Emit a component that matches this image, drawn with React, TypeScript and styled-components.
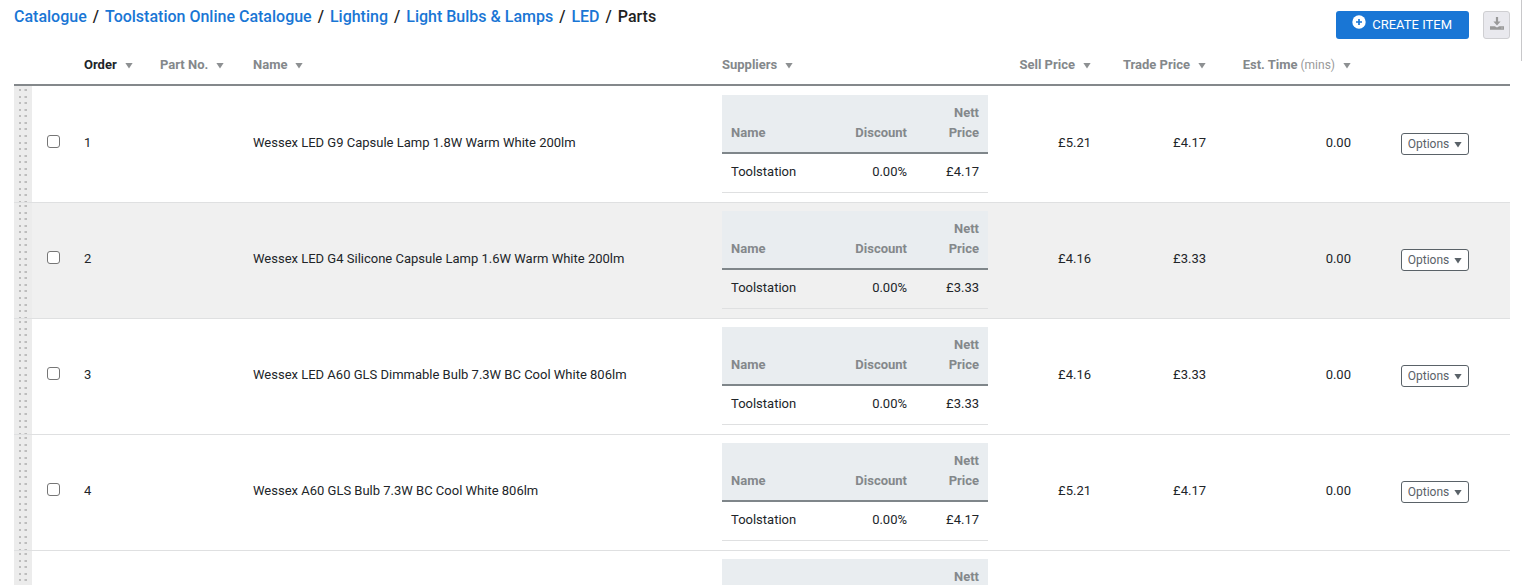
import React from "react";
import styled, { createGlobalStyle } from "styled-components";

const GlobalStyle = createGlobalStyle`
  *, *::before, *::after { box-sizing: border-box; }
  html, body { margin: 0; background: #fff; }
  body {
    font-family: Roboto, "Liberation Sans", sans-serif;
    font-size: 13px;
    line-height: 20px;
    color: #212529;
  }
  button { font-family: inherit; }
`;

const Page = styled.main`
  position: relative;
  height: 100vh;
  overflow: hidden;
  padding: 6px 12px 0 14px;
`;

const ScrollThumb = styled.div`
  position: absolute;
  top: 0;
  right: 0;
  width: 1px;
  height: 61px;
  background: #c8c8ca;
`;

const TopBar = styled.header`
  display: flex;
  justify-content: space-between;
  align-items: flex-start;
  height: 38px;
`;

const Breadcrumb = styled.nav`
  display: flex;
  gap: 6px;
  font-size: 16px;
  font-weight: 500;
  line-height: 22px;
  color: #222;
`;

const Crumb = styled.a`
  color: #1976d5;
  text-decoration: none;
`;

const Actions = styled.div`
  display: flex;
  gap: 14px;
  padding-top: 5px;
`;

const CreateButton = styled.button`
  display: flex;
  align-items: flex-start;
  gap: 6px;
  height: 28px;
  padding: 4px 17px 4px 16px;
  border: 0;
  border-radius: 3px;
  background: #1976d5;
  color: #fff;
  font-size: 13px;
  line-height: 20px;
`;

const DownloadButton = styled.button`
  display: flex;
  justify-content: center;
  width: 27px;
  height: 28px;
  padding: 5px 0;
  border: 1px solid #cfcfd2;
  border-radius: 3px;
  background: #e9e9ee;
`;

const Table = styled.table`
  width: 100%;
  table-layout: fixed;
  border-spacing: 0;
`;

const Col = styled.col<{ $w?: number }>`
  width: ${(p) => (p.$w ? `${p.$w}px` : "auto")};
`;

const HeadCell = styled.th<{ $right?: boolean }>`
  height: 42px;
  padding: 2px 9px 0;
  border-bottom: 2px solid #84888b;
  text-align: ${(p) => (p.$right ? "right" : "left")};
  vertical-align: middle;
  white-space: nowrap;
`;

const SortButton = styled.button<{ $active?: boolean }>`
  display: inline-flex;
  align-items: center;
  gap: 8px;
  padding: 0;
  border: 0;
  background: none;
  color: ${(p) => (p.$active ? "#212529" : "#84888b")};
  font-size: 13px;
  font-weight: 700;
  line-height: 20px;

  small {
    font-size: 12px;
    font-weight: 400;
    color: #999;
  }
`;

const Row = styled.tr<{ $shaded?: boolean }>`
  background: ${(p) => (p.$shaded ? "#f0f0f0" : "#fff")};
  & > td { border-top: 1px solid #dfe0e1; }
  &:first-child > td { border-top-color: transparent; }
`;

const Cell = styled.td<{ $align?: "right" | "center" }>`
  height: 116px;
  padding: 0 9px 4px;
  text-align: ${(p) => p.$align ?? "left"};
  vertical-align: middle;
`;

const SuppliersCell = styled.td`
  padding: 8px 9px 9px;
  vertical-align: top;
`;

const dotStops = [3, 10, 16, 23, 29, 36, 42]
  .map((y) => `#ececec ${y - 1}px, transparent ${y - 1}px, transparent ${y + 1}px, #ececec ${y + 1}px`)
  .join(", ");

const HandleCell = styled.td`
  background:
    linear-gradient(to bottom, ${dotStops}) 0 0 / 100% 46px,
    linear-gradient(to right,
      #ececec 5px, #bdbdbd 5px, #bdbdbd 7px, #ececec 7px,
      #ececec 10px, #d3d3d3 10px, #d3d3d3 11px, #bdbdbd 11px, #bdbdbd 13px, #ececec 13px);
  cursor: move;
`;

const Check = styled.input`
  display: block;
  appearance: none;
  width: 13px;
  height: 13px;
  margin: 0 0 2px 6px;
  border: 1px solid #767676;
  border-radius: 3px;
  background: #fff;
`;

const SupplierTable = styled.table`
  width: 100%;
  table-layout: fixed;
  border-spacing: 0;

  th, td {
    padding: 8px 9px 9px;
    text-align: right;
    vertical-align: bottom;
  }
  th:first-child, td:first-child { text-align: left; }
  th {
    background: #e9edf0;
    border-bottom: 2px solid #7f868a;
    color: #84888b;
    font-weight: 700;
  }
  td {
    padding-bottom: 10px;
    border-bottom: 1px solid #dfe0e1;
  }
`;

const OptionsButton = styled.button`
  display: inline-flex;
  align-items: center;
  gap: 5px;
  height: 22px;
  margin-top: 3px;
  padding: 0 6px;
  border: 1px solid #5a6268;
  border-radius: 3px;
  background: #fff;
  color: #5a6268;
  font-size: 12px;
  line-height: 20px;
`;

const Triangle = ({ color = "#8d9092" }: { color?: string }) => (
  <svg width="8" height="7" viewBox="0 0 8 7" aria-hidden="true">
    <path d="M.4 1h7.2L4 6.6z" fill={color} />
  </svg>
);

const PlusCircle = () => (
  <svg width="14" height="14" viewBox="0 0 14 14" aria-hidden="true">
    <circle cx="7" cy="7" r="6.7" fill="#fff" />
    <path d="M7 4v6M4 7h6" stroke="#1976d5" strokeWidth="1.7" />
  </svg>
);

const DownloadIcon = () => (
  <svg width="14" height="14" viewBox="0 0 14 14" aria-hidden="true">
    <path d="M5.9 0h2.2v4.6h2.5L7 8.4 3.4 4.6h2.5z" fill="#999" />
    <path d="M0 9.3h4.8L7 10.5l2.2-1.2H14v3.5H0z" fill="#999" />
    <path d="M11.5 10.6h1v1h-1z" fill="#d5d5d8" />
  </svg>
);

const crumbs = ["Catalogue", "Toolstation Online Catalogue", "Lighting", "Light Bulbs & Lamps", "LED"];

const items = [
  { name: "Wessex LED G9 Capsule Lamp 1.8W Warm White 200lm", sell: "£5.21", trade: "£4.17" },
  { name: "Wessex LED G4 Silicone Capsule Lamp 1.6W Warm White 200lm", sell: "£4.16", trade: "£3.33" },
  { name: "Wessex LED A60 GLS Dimmable Bulb 7.3W BC Cool White 806lm", sell: "£4.16", trade: "£3.33" },
  { name: "Wessex A60 GLS Bulb 7.3W BC Cool White 806lm", sell: "£5.21", trade: "£4.17" },
  { name: "", sell: "", trade: "" },
];

const columns: { label: string; note?: string; right?: boolean; active?: boolean }[] = [
  { label: "Order", active: true },
  { label: "Part No." },
  { label: "Name" },
  { label: "Suppliers" },
  { label: "Sell Price", right: true },
  { label: "Trade Price", right: true },
  { label: "Est. Time", note: "(mins)", right: true },
];

const widths = [18, 43, 76, 93, undefined, 284, 103, 115, 145, 150];

export default function App() {
  return (
    <Page>
      <GlobalStyle />
      <TopBar>
        <Breadcrumb aria-label="Breadcrumb">
          {crumbs.map((c) => (
            <React.Fragment key={c}>
              <Crumb href="#">{c}</Crumb>
              <span>/</span>
            </React.Fragment>
          ))}
          <span>Parts</span>
        </Breadcrumb>
        <Actions>
          <CreateButton type="button">
            <PlusCircle />
            CREATE ITEM
          </CreateButton>
          <DownloadButton type="button" aria-label="Download">
            <DownloadIcon />
          </DownloadButton>
        </Actions>
      </TopBar>
      <Table>
        <colgroup>
          {widths.map((w, i) => (
            <Col key={i} $w={w} />
          ))}
        </colgroup>
        <thead>
          <tr>
            <HeadCell />
            <HeadCell />
            {columns.map((c) => (
              <HeadCell key={c.label} $right={c.right}>
                <SortButton type="button" $active={c.active}>
                  <span>
                    {c.label}
                    {c.note && <small> {c.note}</small>}
                  </span>
                  <Triangle />
                </SortButton>
              </HeadCell>
            ))}
            <HeadCell />
          </tr>
        </thead>
        <tbody>
          {items.map((item, i) => (
            <Row key={i} $shaded={i === 1}>
              <HandleCell />
              <Cell>
                <Check type="checkbox" aria-label={`Select item ${i + 1}`} />
              </Cell>
              <Cell>{i + 1}</Cell>
              <Cell />
              <Cell>{item.name}</Cell>
              <SuppliersCell>
                <SupplierTable>
                  <colgroup>
                    <Col />
                    <Col $w={90} />
                    <Col $w={72} />
                  </colgroup>
                  <thead>
                    <tr>
                      <th>Name</th>
                      <th>Discount</th>
                      <th>
                        Nett
                        <br />
                        Price
                      </th>
                    </tr>
                  </thead>
                  <tbody>
                    <tr>
                      <td>Toolstation</td>
                      <td>0.00%</td>
                      <td>{item.trade}</td>
                    </tr>
                  </tbody>
                </SupplierTable>
              </SuppliersCell>
              <Cell $align="right">{item.sell}</Cell>
              <Cell $align="right">{item.trade}</Cell>
              <Cell $align="right">0.00</Cell>
              <Cell $align="center">
                <OptionsButton type="button" aria-haspopup="menu">
                  Options
                  <Triangle color="#5a6268" />
                </OptionsButton>
              </Cell>
            </Row>
          ))}
        </tbody>
      </Table>
      <ScrollThumb />
    </Page>
  );
}
